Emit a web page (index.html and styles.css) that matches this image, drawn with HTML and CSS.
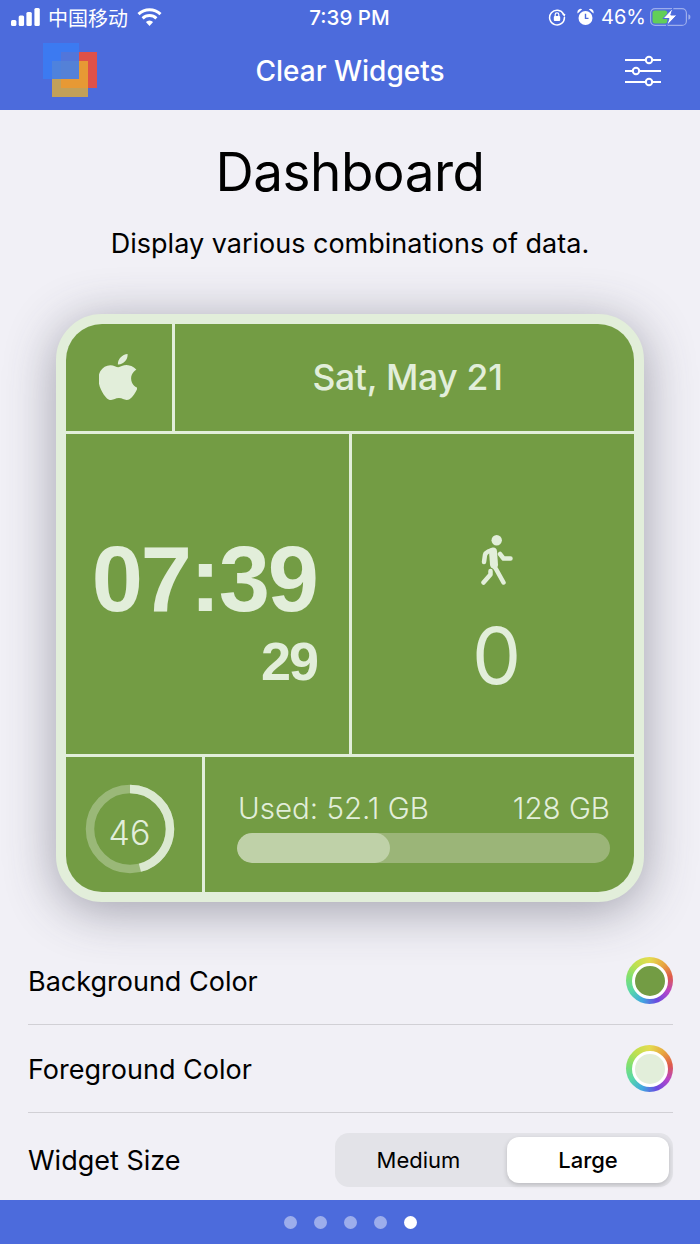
FILE: index.html
```html
<!DOCTYPE html>
<html lang="en">
<head>
    <meta charset="UTF-8">
    <meta name="viewport" content="width=device-width, initial-scale=1.0">
    <title>Clear Widgets</title>
    <link rel="stylesheet" href="styles.css">
</head>
<body>
    <header class="top">
        <div class="status">
            <div class="status-left">
                <svg class="signal" width="29" height="18" viewBox="0 0 29 18" fill="#fff">
                    <rect x="0" y="12" width="5.4" height="6" rx="1.5"/>
                    <rect x="7.7" y="7.5" width="5.4" height="10.5" rx="1.5"/>
                    <rect x="15.4" y="4" width="5.4" height="14" rx="1.5"/>
                    <rect x="23.4" y="0" width="5.4" height="18" rx="1.5"/>
                </svg>
                <span class="carrier">中国移动</span>
                <svg class="wifi" width="25" height="18" viewBox="0 0 25 18" fill="none" stroke="#fff" stroke-width="3">
                    <path d="M1.5 6.2a16 16 0 0 1 22 0"/>
                    <path d="M5.6 10.3a10 10 0 0 1 13.8 0"/>
                    <path d="M12.5 18l-3.6-3.9a5 5 0 0 1 7.2 0z" fill="#fff" stroke="none"/>
                </svg>
            </div>
            <div class="status-time">7:39 PM</div>
            <div class="status-right">
                <svg width="18" height="18" viewBox="0 0 18 18" fill="none" stroke="#fff" stroke-width="1.5">
                    <path d="M15.6 6.2A7.4 7.4 0 1 0 16.4 9"/>
                    <path d="M13.8 5.6l3.6.4-.9 3z" fill="#fff" stroke="none"/>
                    <rect x="5.8" y="8" width="6.4" height="5" rx="1" fill="#fff" stroke="none"/>
                    <path d="M7.2 8V6.6a1.8 1.8 0 0 1 3.6 0V8" stroke-width="1.2"/>
                </svg>
                <svg class="alarm" width="17" height="18" viewBox="0 0 17 18" fill="#fff">
                    <circle cx="8.5" cy="10" r="7"/>
                    <path d="M0.6 5.4a3.4 3.4 0 0 1 4.6-4.2zM16.4 5.4a3.4 3.4 0 0 0-4.6-4.2z"/>
                    <path d="M8.5 5.8v4.6h3" fill="none" stroke="#4c6bdc" stroke-width="1.4"/>
                </svg>
                <span class="percent">46%</span>
                <svg class="battery" width="42" height="18" viewBox="0 0 42 18" fill="none">
                    <rect x="0.6" y="0.6" width="35.8" height="16.8" rx="4.5" stroke="#fff" stroke-opacity=".45" stroke-width="1.2"/>
                    <path d="M38.4 6.2c1.4.4 2 1.5 2 2.8s-.6 2.4-2 2.8z" fill="#fff" fill-opacity=".45"/>
                    <rect x="2.5" y="2.5" width="14.8" height="13" rx="2.5" fill="#62cf58"/>
                    <path d="M23 0l-10 10.5h6L16.5 18l10.5-11h-6.2z" fill="#fff" stroke="#4c6bdc" stroke-width="1"/>
                </svg>
            </div>
        </div>
        <div class="nav">
            <svg class="logo" width="56" height="56" viewBox="0 0 56 56">
                <rect x="19" y="10" width="36" height="36" fill="#df5148"/>
                <rect x="10" y="19" width="36" height="36" fill="#eab22e" fill-opacity=".75"/>
                <rect x="1" y="1" width="36" height="36" fill="#3a7df4" fill-opacity=".85"/>
            </svg>
            <div class="nav-title">Clear Widgets</div>
            <svg class="sliders" width="38" height="32" viewBox="0 0 38 32" stroke="#fff" stroke-width="2" fill="#4c6bdc">
                <path d="M1 5h36M1 16h36M1 27h36"/>
                <circle cx="25" cy="5" r="3.2"/>
                <circle cx="12" cy="16" r="3.2"/>
                <circle cx="25" cy="27" r="3.2"/>
            </svg>
        </div>
    </header>

    <main class="content">
        <h1 class="title">Dashboard</h1>
        <p class="subtitle">Display various combinations of data.</p>

        <div class="widget">
            <div class="widget-inner">
                <div class="row row-top">
                    <div class="cell cell-logo">
                        <svg width="38" height="46" viewBox="2.5 0 19 24" preserveAspectRatio="none" fill="#e2eeda">
                            <path d="M12.152 6.896c-.948 0-2.415-1.078-3.96-1.04-2.04.027-3.91 1.183-4.961 3.014-2.117 3.675-.546 9.103 1.519 12.09 1.013 1.454 2.208 3.09 3.792 3.039 1.52-.065 2.09-.987 3.935-.987 1.831 0 2.35.987 3.96.948 1.637-.026 2.676-1.48 3.676-2.948 1.156-1.688 1.636-3.325 1.662-3.415-.039-.013-3.182-1.221-3.22-4.857-.026-3.04 2.48-4.494 2.597-4.559-1.429-2.09-3.623-2.324-4.39-2.376-2-.156-3.675 1.09-4.61 1.09zM15.53 3.83c.843-1.012 1.4-2.427 1.245-3.83-1.207.052-2.662.805-3.532 1.818-.78.896-1.454 2.338-1.273 3.714 1.338.104 2.715-.688 3.559-1.701"/>
                        </svg>
                    </div>
                    <div class="cell cell-date">Sat, May 21</div>
                </div>
                <div class="row row-mid">
                    <div class="cell cell-clock">
                        <div class="clock">07:39</div>
                        <div class="seconds">29</div>
                    </div>
                    <div class="cell cell-steps">
                        <svg width="32" height="50" viewBox="0 0 32 50" fill="none" stroke="#e2eeda" stroke-width="4.5" stroke-linecap="round" stroke-linejoin="round">
                            <circle cx="15.7" cy="5.2" r="5.2" fill="#e2eeda" stroke="none"/>
                            <path d="M3 27l1-7c1-3 5-4.5 8-4.5"/>
                            <path d="M12 16.5l1 13" stroke-width="8"/>
                            <path d="M19 19l3.5 4.5h7"/>
                            <path d="M12 30l3 4 7.5 13.5"/>
                            <path d="M9.5 36l0 3.5-7 8"/>
                        </svg>
                        <div class="steps">0</div>
                    </div>
                </div>
                <div class="row row-bottom">
                    <div class="cell cell-ring">
                        <svg class="ring" width="90" height="90" viewBox="0 0 90 90" fill="none" stroke-width="8.5">
                            <circle cx="45" cy="45" r="40" stroke="#e2eeda" stroke-opacity=".35"/>
                            <circle cx="45" cy="45" r="40" stroke="#e2eeda" stroke-opacity=".9" pathLength="100" stroke-dasharray="46 100" transform="rotate(-90 45 45)"/>
                        </svg>
                        <span class="ring-value">46</span>
                    </div>
                    <div class="cell cell-storage">
                        <div class="storage-text"><span>Used: 52.1 GB</span><span>128 GB</span></div>
                        <div class="bar"><div class="bar-fill" style="width: 41%"></div></div>
                    </div>
                </div>
            </div>
        </div>

        <div class="settings">
            <div class="setting">
                <span class="setting-label">Background Color</span>
                <span class="swatch"><span class="swatch-dot swatch-bg"></span></span>
            </div>
            <div class="setting">
                <span class="setting-label">Foreground Color</span>
                <span class="swatch"><span class="swatch-dot swatch-fg"></span></span>
            </div>
            <div class="setting setting-last">
                <span>Widget Size</span>
                <div class="segment">
                    <div class="segment-item">Medium</div>
                    <div class="segment-item segment-on">Large</div>
                </div>
            </div>
        </div>
    </main>

    <footer class="pager">
        <span class="dot"></span>
        <span class="dot"></span>
        <span class="dot"></span>
        <span class="dot"></span>
        <span class="dot dot-on"></span>
    </footer>
</body>
</html>
```
FILE: styles.css
```css
html, body {
    margin: 0;
    padding: 0;
}
body {
    width: 700px;
    height: 1244px;
    overflow: hidden;
    display: flex;
    flex-direction: column;
    background-color: #f1f0f6;
    color: #000;
    font-family: Inter, "Noto Sans CJK SC", sans-serif;
}
svg {
    display: block;
}

/* top blue area */
.top {
    height: 110px;
    background-color: #4c6bdc;
    color: #fff;
}
.status {
    height: 36px;
    display: grid;
    grid-template-columns: 1fr auto 1fr;
    align-items: center;
    padding: 0 8px 2px 11px;
    box-sizing: border-box;
    font-size: 20.5px;
}
.status-left, .status-right {
    display: flex;
    align-items: center;
}
.status-right {
    justify-content: flex-end;
}
.carrier {
    font-family: "Noto Sans CJK SC", sans-serif;
    font-size: 20px;
    margin: 0 9px 0 8px;
}
.status-time {
    font-weight: 500;
    margin-right: 4px;
}
.alarm {
    margin-left: 11px;
}
.percent {
    margin: 0 4px 0 7px;
    font-size: 20px;
}
.nav {
    height: 74px;
    display: grid;
    grid-template-columns: 1fr auto 1fr;
    align-items: center;
    padding: 0 38px 2px;
    box-sizing: border-box;
    margin-top: -1px;
}
.logo {
    margin: -2px 0 0 4px;
}
.nav-title {
    font-size: 28px;
    font-weight: 500;
}
.sliders {
    justify-self: end;
}

/* main */
.content {
    flex: 1;
    display: flex;
    flex-direction: column;
    align-items: center;
}
.title {
    margin: 29px 0 0;
    font-size: 53px;
    line-height: 66px;
    font-weight: 400;
    letter-spacing: -0.5px;
}
.subtitle {
    margin: 21px 0 0;
    font-size: 27px;
    line-height: 36px;
}

/* widget */
.widget {
    width: 588px;
    height: 588px;
    box-sizing: border-box;
    margin-top: 52px;
    border: 10px solid #e2eeda;
    border-radius: 46px;
    background-color: #e2eeda;
    box-shadow: 0 8px 50px rgba(60, 60, 80, 0.45);
    color: #e2eeda;
}
.widget-inner {
    height: 100%;
    display: flex;
    flex-direction: column;
    gap: 3px;
    border-radius: 36px;
    overflow: hidden;
}
.row {
    display: flex;
    gap: 3px;
}
.row-top {
    height: 107px;
}
.row-mid {
    height: 320px;
}
.row-bottom {
    height: 135px;
}
.cell {
    background-color: #739c44;
    display: flex;
    align-items: center;
    justify-content: center;
}
.cell-logo {
    width: 106px;
    padding: 0 2px 1px 0;
    box-sizing: border-box;
}
.cell-date {
    flex: 1;
    padding-left: 6px;
    font-size: 35.5px;
    font-weight: 500;
    letter-spacing: -0.3px;
}
.cell-clock {
    width: 283px;
    flex-direction: column;
    align-items: flex-end;
    justify-content: flex-start;
    padding: 103px 32px 0 0;
    box-sizing: border-box;
}
.clock {
    font-family: "Liberation Sans", sans-serif;
    font-weight: 700;
    font-size: 92px;
    line-height: 84px;
    letter-spacing: -2px;
}
.seconds {
    font-family: "Liberation Sans", sans-serif;
    font-weight: 700;
    font-size: 54px;
    line-height: 50px;
    letter-spacing: -2px;
    margin-top: 15px;
}
.cell-steps {
    flex: 1;
    flex-direction: column;
    justify-content: flex-start;
    padding: 101px 0 0 7px;
    box-sizing: border-box;
}
.steps {
    font-size: 78px;
    line-height: 94px;
    font-weight: 400;
    margin-top: 24px;
}
.cell-ring {
    width: 136px;
    padding: 8px 9px 0 0;
    box-sizing: border-box;
    position: relative;
}
.ring-value {
    position: absolute;
    left: 0;
    right: 9px;
    top: 56px;
    text-align: center;
    font-size: 34px;
    line-height: 40px;
    font-weight: 300;
}
.cell-storage {
    flex: 1;
    flex-direction: column;
    align-items: stretch;
    justify-content: flex-start;
    padding: 34px 24px 0 32px;
}
.storage-text {
    display: flex;
    justify-content: space-between;
    font-size: 29.5px;
    line-height: 34px;
    font-weight: 300;
    padding-left: 1px;
}
.bar {
    height: 30px;
    margin-top: 8px;
    border-radius: 15px;
    background-color: #9bb578;
    overflow: hidden;
}
.bar-fill {
    height: 100%;
    border-radius: 15px;
    background-color: #bfd1a8;
}

/* settings */
.settings {
    align-self: stretch;
    margin: 35px 27px 0 28px;
}
.setting {
    height: 88px;
    box-sizing: border-box;
    display: flex;
    align-items: center;
    justify-content: space-between;
    border-bottom: 1px solid #d1d0d5;
    font-size: 27px;
}
.setting-label {
    padding-top: 2px;
}
.setting-last {
    height: 74px;
    padding-top: 20px;
    border-bottom: none;
}
.swatch {
    width: 47px;
    height: 47px;
    box-sizing: border-box;
    border-radius: 50%;
    background: conic-gradient(#e4dc50, #e8a840, #df5a4a, #b845c8, #6a4ae0, #40a8e0, #58d8a8, #80e070, #c0e050, #e4dc50);
    display: flex;
    align-items: center;
    justify-content: center;
}
.swatch-dot {
    width: 30px;
    height: 30px;
    border: 3.5px solid #fff;
    border-radius: 50%;
}
.swatch-bg {
    background-color: #739c44;
}
.swatch-fg {
    background-color: #e2eeda;
}
.segment {
    width: 338px;
    height: 54px;
    box-sizing: border-box;
    padding: 4px;
    display: flex;
    border-radius: 14px;
    background-color: #e3e3e8;
    font-size: 22px;
    font-weight: 400;
}
.segment-item {
    flex: 1;
    display: flex;
    align-items: center;
    justify-content: center;
    padding-right: 9px;
}
.segment-on {
    flex: 0 0 162px;
    padding-right: 0;
    background-color: #fff;
    border-radius: 12px;
    box-shadow: 0 2px 5px rgba(0, 0, 0, 0.18);
    font-weight: 500;
}

/* pager */
.pager {
    height: 44px;
    background-color: #4c6bdc;
    display: flex;
    align-items: center;
    justify-content: center;
    gap: 17px;
}
.dot {
    width: 13px;
    height: 13px;
    border-radius: 50%;
    background-color: rgba(255, 255, 255, 0.45);
}
.dot-on {
    background-color: #fff;
}
```
